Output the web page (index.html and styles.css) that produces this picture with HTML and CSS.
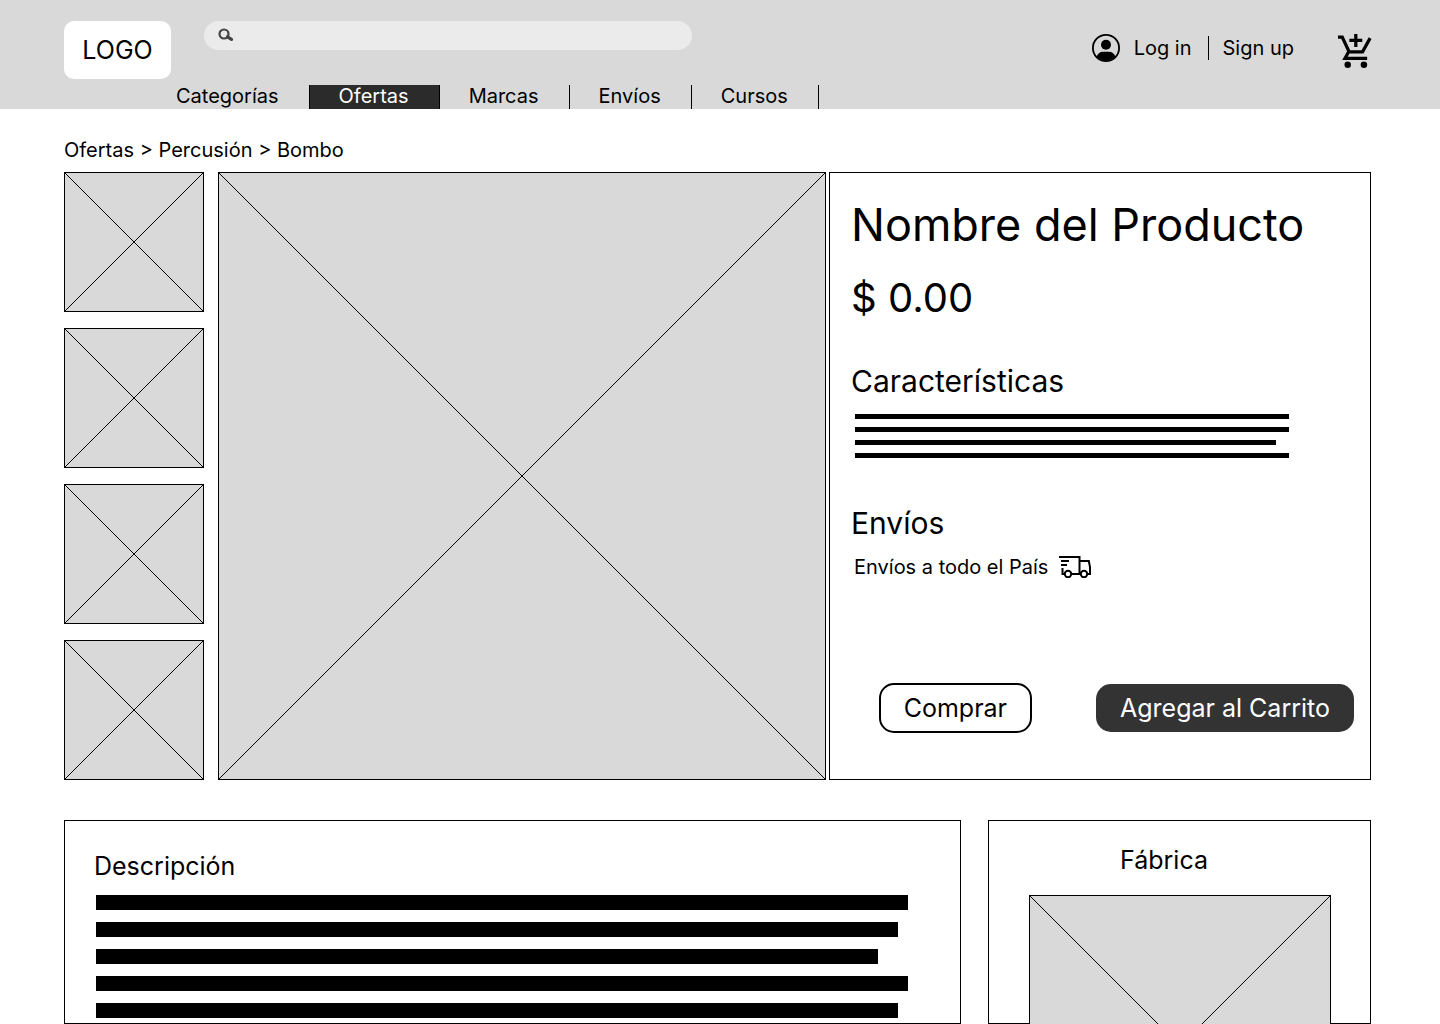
FILE: index.html
```html
<!DOCTYPE html>
<html lang="es">
<head>
<meta charset="utf-8">
<meta name="viewport" content="width=device-width, initial-scale=1">
<title>Nombre del Producto</title>
<link rel="stylesheet" href="styles.css">
</head>
<body>
<header class="header">
  <div class="topbar">
    <a class="logo" href="#">LOGO</a>
    <label class="search">
      <svg class="search-icon" viewBox="0 0 16 16" aria-hidden="true"><circle cx="6" cy="7" r="4.5" fill="none" stroke="#444" stroke-width="2.2"/><path d="M9.5 9.8l4 2.5" stroke="#444" stroke-width="3.2" stroke-linecap="round"/></svg>
      <input class="search-input" type="search" aria-label="Buscar">
    </label>
    <div class="account">
      <svg class="user-icon" viewBox="0 0 28 28" aria-hidden="true"><circle cx="14" cy="14" r="13.1" fill="none" stroke="#000" stroke-width="1.8"/><circle cx="14" cy="10.8" r="5"/><path d="M4.500 22.600C6 19.500 8 17.800 11 17.800h6c3 0 5 1.700 6.500 4.800A13 13 0 0 1 4.500 22.600z"/></svg>
      <a class="account-link" href="#">Log in</a>
      <a class="account-link account-signup" href="#">Sign up</a>
      <a class="cart" href="#" aria-label="Carrito"><svg class="cart-icon" viewBox="1 1 21 21" aria-hidden="true"><path d="M11 9h2V6h3V4h-3V1h-2v3H8v2h3z"/><circle cx="7" cy="20" r="2"/><circle cx="17" cy="20" r="2"/><path d="M8.100 13h8.640l4.970-8.970-1.740-.96L15.550 11H8.530L4.270 2H1v2h2l3.600 7.590L3.620 17H19v-2H7z"/></svg></a>
    </div>
  </div>
  <nav class="nav">
    <a class="nav-link" href="#">Categorías</a>
    <a class="nav-link nav-link-active" href="#">Ofertas</a>
    <a class="nav-link" href="#">Marcas</a>
    <a class="nav-link" href="#">Envíos</a>
    <a class="nav-link" href="#">Cursos</a>
  </nav>
</header>
<main class="main">
  <nav class="breadcrumb" aria-label="Ruta"><a href="#">Ofertas</a> &gt; <a href="#">Percusión</a> &gt; <a href="#">Bombo</a></nav>
  <section class="product">
    <div class="gallery">
      <div class="thumbs">
        <svg class="picture thumb" viewBox="0 0 100 100" preserveAspectRatio="none"><path d="M0 0L100 100M100 0L0 100"/></svg>
        <svg class="picture thumb" viewBox="0 0 100 100" preserveAspectRatio="none"><path d="M0 0L100 100M100 0L0 100"/></svg>
        <svg class="picture thumb" viewBox="0 0 100 100" preserveAspectRatio="none"><path d="M0 0L100 100M100 0L0 100"/></svg>
        <svg class="picture thumb" viewBox="0 0 100 100" preserveAspectRatio="none"><path d="M0 0L100 100M100 0L0 100"/></svg>
      </div>
      <svg class="picture" viewBox="0 0 100 100" preserveAspectRatio="none"><path d="M0 0L100 100M100 0L0 100"/></svg>
    </div>
    <div class="panel info">
      <h1 class="title">Nombre del Producto</h1>
      <p class="price">$ 0.00</p>
      <h2 class="subtitle">Características</h2>
      <div class="lines features">
        <div class="line"></div>
        <div class="line line-short"></div>
        <div class="line line-shorter"></div>
        <div class="line"></div>
      </div>
      <h2 class="subtitle">Envíos</h2>
      <p class="shipping">Envíos a todo el País
        <svg class="truck-icon" viewBox="0 0 33 22" aria-hidden="true"><path d="M0 1h20.500v17M20.500 5h9.300l1.200 6v7h-2.500M22 18H12M3.500 12v6H6M2 5h8M2 9h6"/><circle cx="9" cy="18" r="3.200"/><circle cx="25" cy="18" r="3.200"/></svg>
      </p>
      <div class="actions">
        <button class="button" type="button">Comprar</button>
        <button class="button button-dark" type="button">Agregar al Carrito</button>
      </div>
    </div>
  </section>
  <section class="details">
    <div class="panel description">
      <h2 class="heading">Descripción</h2>
      <div class="lines paragraph">
        <div class="line"></div>
        <div class="line line-short"></div>
        <div class="line line-shorter"></div>
        <div class="line"></div>
        <div class="line line-short"></div>
      </div>
    </div>
    <div class="panel factory">
      <h2 class="heading factory-heading">Fábrica</h2>
      <div class="crop">
        <svg class="picture" viewBox="0 0 100 100" preserveAspectRatio="none"><path d="M0 0L100 100M100 0L0 100"/></svg>
      </div>
    </div>
  </section>
</main>
</body>
</html>
```

FILE: styles.css
```css
* {
  box-sizing: border-box;
}

body {
  margin: 0;
  background: #fff;
  color: #000;
  font-family: Inter, "Liberation Sans", sans-serif;
  font-size: 20px;
  line-height: 24px;
}

a {
  color: inherit;
  text-decoration: none;
}

h1,
h2,
p {
  margin: 0;
  font-weight: 400;
}

svg {
  display: block;
  flex-shrink: 0;
}

.header {
  padding: 21px 68px 0 64px;
  background: #d9d9d9;
}

.topbar {
  display: flex;
  align-items: flex-start;
  min-height: 64px;
}

.logo {
  display: grid;
  place-items: center;
  width: 107px;
  height: 58px;
  border-radius: 10px;
  background: #fff;
  font-size: 25px;
}

.search {
  display: flex;
  flex: 0 1 488px;
  margin-left: 33px;
  padding: 6px 14px;
  height: 29px;
  border-radius: 15px;
  background: #ebebeb;
}

.search-icon {
  width: 16px;
  height: 16px;
}

.search-input {
  flex: 1;
  min-width: 0;
  padding: 0 8px;
  border: 0;
  outline: 0;
  background: transparent;
  font: inherit;
  font-size: 16px;
}

.account {
  display: flex;
  align-items: center;
  height: 54px;
  margin-left: auto;
}

.user-icon {
  width: 28px;
  height: 28px;
  margin-right: 14px;
}

.account-signup {
  margin-left: 16px;
  padding-left: 14px;
  border-left: 1px solid #000;
}

.cart {
  margin-left: 44px;
  padding-top: 6px;
}

.cart-icon {
  width: 34px;
  height: 34px;
}

.nav {
  display: flex;
  margin-left: 83px;
}

.nav-link {
  padding: 0 30px 2px 29px;
  border-right: 1px solid #000;
  line-height: 22px;
}

.nav-link-active {
  background: #2b2b2b;
  color: #fff;
}

.main {
  padding: 29px 69px 0 64px;
}

.breadcrumb {
  margin-bottom: 10px;
}

.product {
  display: grid;
  grid-template-columns: minmax(0, 762fr) minmax(0, 542fr);
  gap: 3px;
}

.gallery {
  display: grid;
  grid-template-columns: 140px minmax(0, 1fr);
  align-items: start;
  gap: 14px;
}

.thumbs {
  display: grid;
  gap: 16px;
}

.picture {
  width: 100%;
  aspect-ratio: 1;
  border: 1px solid #000;
  background: #d9d9d9;
  stroke: #000;
}

.picture path {
  vector-effect: non-scaling-stroke;
}

.panel {
  display: flex;
  flex-direction: column;
  border: 1px solid #000;
}

.info {
  padding: 25px 16px 46px 21px;
}

.title {
  font-size: 45px;
  line-height: 54px;
}

.price {
  margin: 22px 0 41px;
  font-size: 40px;
  line-height: 48px;
}

.subtitle {
  font-size: 30px;
  line-height: 36px;
}

.lines {
  display: grid;
}

.line {
  background: #000;
}

.features {
  gap: 8px;
  margin: 15px 65px 47px 4px;
}

.features .line {
  height: 5px;
}

.features .line-shorter {
  margin-right: 13px;
}

.shipping {
  display: flex;
  align-items: center;
  gap: 11px;
  margin: 14px 0 24px 3px;
}

.truck-icon {
  width: 33px;
  height: 22px;
  fill: none;
  stroke: #000;
  stroke-width: 2;
}

.actions {
  display: flex;
  align-items: center;
  justify-content: flex-end;
  gap: 64px;
  margin-top: auto;
}

.button {
  padding: 8px 23px;
  border: 2px solid #000;
  border-radius: 15px;
  background: #fff;
  color: #000;
  font: inherit;
  font-size: 25px;
  line-height: 30px;
}

.button-dark {
  padding: 9px 24px;
  border: 0;
  background: #333;
  color: #fff;
}

.details {
  display: grid;
  grid-template-columns: minmax(0, 897fr) minmax(0, 383fr);
  gap: 27px;
  margin-top: 40px;
}

.heading {
  font-size: 25px;
  line-height: 30px;
}

.description {
  padding: 30px 52px 5px 29px;
}

.paragraph {
  gap: 12px;
  margin: 14px 0 0 2px;
}

.paragraph .line {
  height: 15px;
}

.paragraph .line-short {
  margin-right: 10px;
}

.paragraph .line-shorter {
  margin-right: 30px;
}

.factory {
  padding: 24px 39px 0 40px;
}

.factory-heading {
  padding-right: 32px;
  text-align: center;
}

/* The picture runs over the panel's lower border and is cut there. */
.crop {
  flex: 1 1 0;
  min-height: 0;
  margin: 20px 0 -1px;
  overflow: hidden;
}
```
